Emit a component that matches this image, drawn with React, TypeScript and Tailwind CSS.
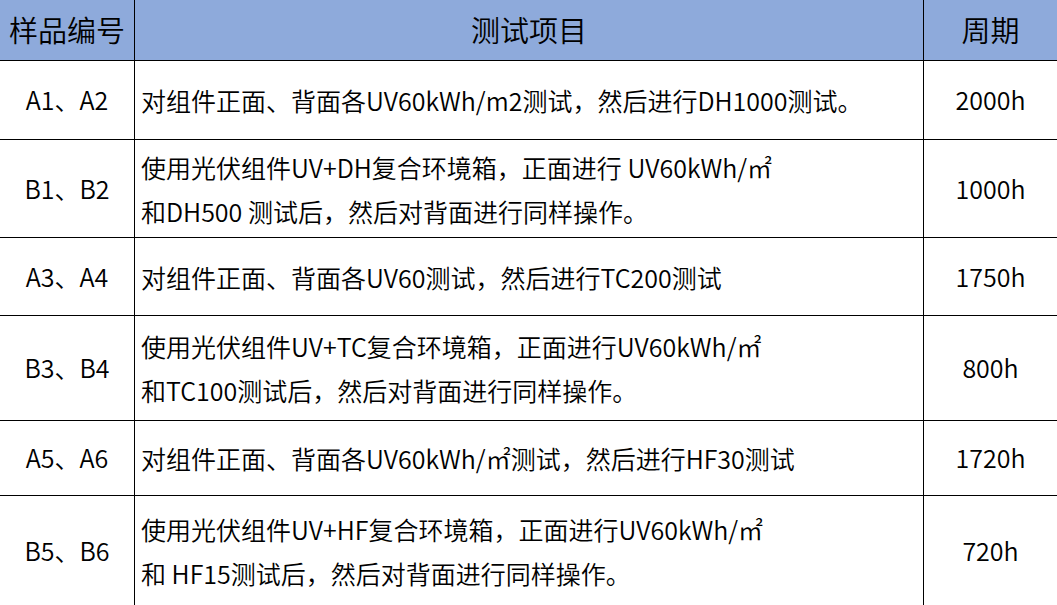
const rows = [
  { id: "A1、A2", lines: ["对组件正面、背面各UV60kWh/m2测试，然后进行DH1000测试。"], period: "2000h", h: "h-[79px]" },
  {
    id: "B1、B2",
    lines: ["使用光伏组件UV+DH复合环境箱，正面进行 UV60kWh/㎡", "和DH500 测试后，然后对背面进行同样操作。"],
    period: "1000h",
    h: "h-[98px]",
  },
  { id: "A3、A4", lines: ["对组件正面、背面各UV60测试，然后进行TC200测试"], period: "1750h", h: "h-[78px]" },
  {
    id: "B3、B4",
    lines: ["使用光伏组件UV+TC复合环境箱，正面进行UV60kWh/㎡", "和TC100测试后，然后对背面进行同样操作。"],
    period: "800h",
    h: "h-[105px]",
  },
  { id: "A5、A6", lines: ["对组件正面、背面各UV60kWh/㎡测试，然后进行HF30测试"], period: "1720h", h: "h-[75px]" },
  {
    id: "B5、B6",
    lines: ["使用光伏组件UV+HF复合环境箱，正面进行UV60kWh/㎡", "和 HF15测试后，然后对背面进行同样操作。"],
    period: "720h",
    h: "h-[110px]",
  },
];

export default function App() {
  return (
    <div className="w-[1057px] h-[605px] overflow-hidden bg-white text-black font-['Noto_Sans_CJK_SC',sans-serif] font-[350]">
      <div className="grid grid-cols-[135px_789px_133px]">
        {/* header */}
        <div className="h-[61px] bg-[#8eaadb] border-r border-b border-black flex items-center justify-center text-[29px]">
          样品编号
        </div>
        <div className="h-[61px] bg-[#8eaadb] border-r border-b border-black flex items-center justify-center text-[29px]">
          测试项目
        </div>
        <div className="h-[61px] bg-[#8eaadb] border-b border-black flex items-center justify-center text-[29px]">
          周期
        </div>

        {rows.map((r) => (
          <div key={r.id} className="contents">
            <div className={`${r.h} border-r border-b border-black flex items-center justify-center text-[25px]`}>
              {r.id}
            </div>
            <div className={`${r.h} border-r border-b border-black flex flex-col justify-center pl-[6px] text-[25px] leading-[44px]`}>
              {r.lines.map((l) => (
                <div key={l}>{l}</div>
              ))}
            </div>
            <div className={`${r.h} border-b border-black flex items-center justify-center text-[25px]`}>
              {r.period}
            </div>
          </div>
        ))}
      </div>
    </div>
  );
}
